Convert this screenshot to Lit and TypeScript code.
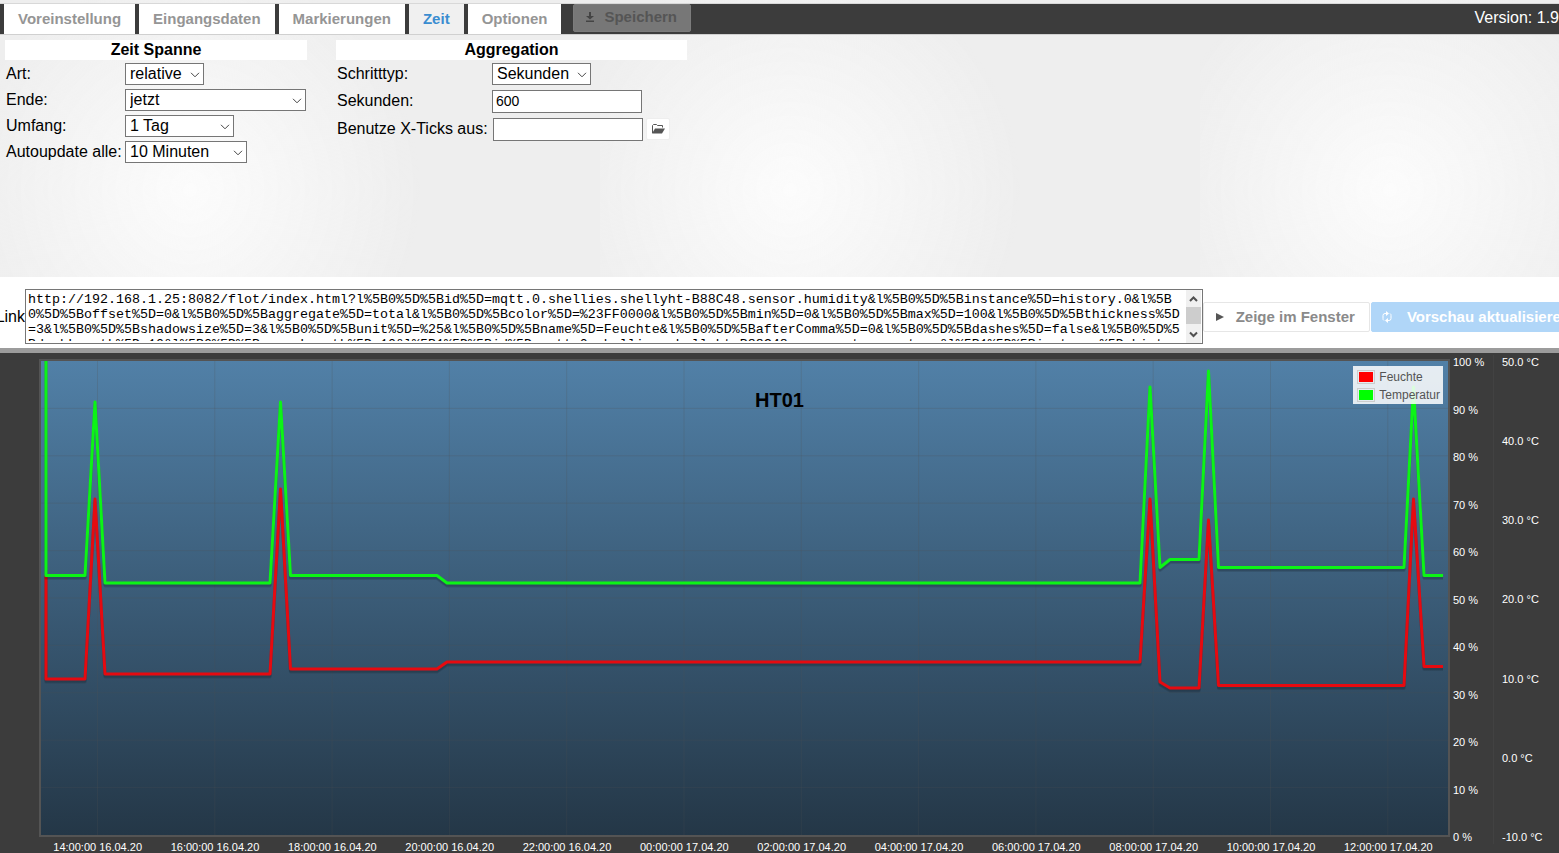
import { LitElement, html, svg, css } from "lit";
import { customElement, property, state } from "lit/decorators.js";
import { classMap } from "lit/directives/class-map.js";

const LINK = [
  "http://192.168.1.25:8082/flot/index.html?l%5B0%5D%5Bid%5D=mqtt.0.shellies.shellyht-B88C48.sensor.humidity&l%5B0%5D%5Binstance%5D=history.0&l%5B",
  "0%5D%5Boffset%5D=0&l%5B0%5D%5Baggregate%5D=total&l%5B0%5D%5Bcolor%5D=%23FF0000&l%5B0%5D%5Bmin%5D=0&l%5B0%5D%5Bmax%5D=100&l%5B0%5D%5Bthickness%5D",
  "=3&l%5B0%5D%5Bshadowsize%5D=3&l%5B0%5D%5Bunit%5D=%25&l%5B0%5D%5Bname%5D=Feuchte&l%5B0%5D%5BafterComma%5D=0&l%5B0%5D%5Bdashes%5D=false&l%5B0%5D%5",
  "BdashLength%5D=10&l%5B0%5D%5BspaceLength%5D=10&l%5B1%5D%5Bid%5D=mqtt.0.shellies.shellyht-B88C48.sensor.temperature&l%5B1%5D%5Binstance%5D=histor",
].join("\n");

type Point = [number, number];

// Points in the coordinate system of the plot's viewBox
const HUMIDITY: Point[] = [
  [46, 575], [46, 679], [85, 679], [95, 499], [105, 674], [270, 674],
  [280.5, 489], [290.5, 669], [437, 669], [447, 662], [1140, 662], [1150, 499],
  [1160, 682], [1170, 688], [1199, 688], [1208.5, 520], [1218.5, 685.5],
  [1404, 685.5], [1413.5, 499], [1424, 666.5], [1443, 666.5],
];
const TEMPERATURE: Point[] = [
  [46, 350], [46, 575.5], [85, 575.5], [95, 402], [105, 583], [270, 583],
  [280.5, 402], [290.5, 575.5], [437, 575.5], [447, 583], [1140, 583],
  [1150, 387], [1160, 567.5], [1170, 559.5], [1199, 559.5], [1208.5, 371],
  [1218.5, 567.5], [1404, 567.5], [1413.5, 387], [1424, 575.5], [1443, 575.5],
];

const TIMES = [
  "14:00:00 16.04.20", "16:00:00 16.04.20", "18:00:00 16.04.20", "20:00:00 16.04.20",
  "22:00:00 16.04.20", "00:00:00 17.04.20", "02:00:00 17.04.20", "04:00:00 17.04.20",
  "06:00:00 17.04.20", "08:00:00 17.04.20", "10:00:00 17.04.20", "12:00:00 17.04.20",
];
const PERCENTS = [100, 90, 80, 70, 60, 50, 40, 30, 20, 10, 0];
const DEGREES = ["50.0", "40.0", "30.0", "20.0", "10.0", "0.0", "-10.0"];

@customElement("drop-down")
class DropDown extends LitElement {
  @property() label = "";
  @property({ type: Array }) options: string[] = [];

  static styles = css`
    :host { display: grid; }
    .select, .chevron { grid-area: 1 / 1; }
    .select {
      appearance: none;
      box-sizing: border-box;
      width: 100%;
      height: 22px;
      margin: 0;
      padding: 0 20px 0 4px;
      border: 1px solid #767676;
      border-radius: 0;
      background: #fff;
      color: #000;
      font: 16px/20px "Liberation Sans", Arial, sans-serif;
    }
    .chevron {
      justify-self: end;
      align-self: center;
      width: 10px;
      height: 6px;
      margin: 2px 4px 0 0;
      pointer-events: none;
    }
  `;

  render() {
    return html`
      <select class="select" aria-label=${this.label}>
        ${this.options.map((o) => html`<option>${o}</option>`)}
      </select>
      <svg class="chevron" viewBox="0 0 10 6" aria-hidden="true">
        <path d="M1 .8 5 4.8 9 .8" fill="none" stroke="#444" />
      </svg>
    `;
  }
}

@customElement("flot-chart")
class FlotChart extends LitElement {
  static styles = css`
    :host {
      position: relative;
      display: grid;
      grid-template-columns: minmax(0, 1fr) 43px 66px;
      grid-template-rows: minmax(240px, 1fr) 16px;
      padding: 6px 0 0 39px;
      background: #3c3c3c;
      color: #fff;
      font: 11px/14px "Liberation Sans", Arial, sans-serif;
    }
    .plot {
      position: relative;
      border: 2px solid #545454;
      background: linear-gradient(#5180a7, #243747);
    }
    .canvas { position: absolute; inset: 0; width: 100%; height: 100%; }
    .grid { stroke: rgba(84, 84, 84, 0.22); stroke-width: 1; }
    .line { fill: none; stroke-width: 3; stroke-linejoin: round; }
    .shade { fill: none; stroke: rgba(0, 0, 0, 0.11); stroke-width: 3; stroke-linejoin: round; }
    .line, .shade, .grid { vector-effect: non-scaling-stroke; }
    .red { stroke: #e60a10; }
    .green { stroke: #0cf416; }
    .legend {
      position: absolute;
      top: 5px;
      right: 5px;
      margin: 0;
      padding: 2px 3px 0 4px;
      list-style: none;
      background: rgba(255, 255, 255, 0.85);
      color: #545454;
      font-size: 12px;
      line-height: 18px;
    }
    .entry { display: flex; align-items: center; gap: 4px; }
    .swatch {
      width: 14px;
      height: 10px;
      padding: 1px;
      border: 1px solid #ccc;
      background-clip: content-box;
    }
    .swatch-red { background-color: #f00; }
    .swatch-green { background-color: #0f0; }
    .title {
      position: absolute;
      top: 36px;
      left: 0;
      right: 0;
      margin: 0;
      color: #000;
      font-size: 20px;
      line-height: 22px;
      text-align: center;
    }
    .axis {
      display: flex;
      flex-direction: column;
      justify-content: space-between;
      margin: -4px 0 -7px;
      padding-left: 3px;
      white-space: nowrap;
    }
    .degrees { border-left: 1px solid #424242; padding-left: 8px; }
    .times {
      display: grid;
      grid-template-columns: repeat(12, minmax(0, 1fr));
      text-align: center;
      white-space: nowrap;
      padding: 3px 3px 0 0;
    }
  `;

  private trace(points: Point[], dy = 0) {
    return points.map(([x, y]) => `${x},${y + dy}`).join(" ");
  }

  render() {
    return html`
      <div class="plot">
        <svg class="canvas" viewBox="41 361 1407 474" preserveAspectRatio="none" role="img" aria-label="HT01">
          ${TIMES.map((_, i) => {
            const x = 97.5 + i * 117.3;
            return svg`<line class="grid" x1=${x} x2=${x} y1="361" y2="835" />`;
          })}
          ${PERCENTS.slice(1, -1).map((p) => {
            const y = 835 - p * 4.74;
            return svg`<line class="grid" x1="41" x2="1448" y1=${y} y2=${y} />`;
          })}
          ${[
            { points: HUMIDITY, tone: "red" },
            { points: TEMPERATURE, tone: "green" },
          ].map(({ points, tone }) => svg`
            <polyline class="shade" points=${this.trace(points, 3)} />
            <polyline class="shade" points=${this.trace(points, 2)} />
            <polyline class="line ${tone}" points=${this.trace(points)} />
          `)}
        </svg>
        <ul class="legend">
          <li class="entry"><span class="swatch swatch-red"></span>Feuchte</li>
          <li class="entry"><span class="swatch swatch-green"></span>Temperatur</li>
        </ul>
      </div>
      <div class="axis">${PERCENTS.map((p) => html`<span>${p} %</span>`)}</div>
      <div class="axis degrees">${DEGREES.map((d) => html`<span>${d} °C</span>`)}</div>
      <div class="times">${TIMES.map((t) => html`<span>${t}</span>`)}</div>
      <h1 class="title">HT01</h1>
    `;
  }
}

@customElement("app-root")
class AppRoot extends LitElement {
  @state() private active = "Zeit";

  static styles = css`
    :host {
      display: flex;
      flex-direction: column;
      min-height: 100vh;
      overflow: hidden;
      background: #fff;
      color: #000;
      font: 16px/20px "Liberation Sans", Arial, sans-serif;
    }
    .settings {
      min-height: 277px;
      background:
        radial-gradient(circle at 190px 190px, #fcfcfc, rgba(252, 252, 252, 0) 230px) 0 0 / 600px 420px
        #eee;
    }
    .bar {
      display: flex;
      height: 30px;
      padding-left: 4px;
      border-top: 1px solid #d8d8d8;
      border-bottom: 1px solid #d0d0d0;
      margin-top: 3px;
      background: #3c3c3c;
    }
    .tabs { display: flex; gap: 4px; }
    .tab {
      padding: 0 14px 1px;
      border: 0;
      background: #fff;
      color: #959595;
      font: bold 15px/28px "Liberation Sans", Arial, sans-serif;
    }
    .tab.active { background: #f0f0f0; color: #3a8dd0; }
    .button {
      display: flex;
      align-items: center;
      border: 1px solid #ddd;
      border-radius: 2px;
      background: #fff;
      color: #8a8a8a;
      font: bold 15px/20px "Liberation Sans", Arial, sans-serif;
      white-space: nowrap;
    }
    .save {
      height: 28px;
      margin-left: 12px;
      padding: 0 13px 2px 8px;
      gap: 6px;
      border-color: #7c7c7c;
      background: #777;
      color: #555;
    }
    .icon { flex: none; width: 16px; height: 16px; }
    .version { margin: 4px 0 0 auto; color: #fff; white-space: nowrap; }
    .panels { display: flex; align-items: flex-start; gap: 29px; padding: 5px 5px 0; }
    .panel { display: grid; align-items: center; }
    .span { grid-template-columns: 119px 183px; }
    .aggregation { grid-template-columns: 155px 196px; }
    .heading {
      grid-column: 1 / -1;
      margin: 0 0 1px;
      background: #fff;
      font-size: 16px;
      line-height: 20px;
      text-align: center;
    }
    .name { padding-left: 1px; line-height: 26px; white-space: nowrap; }
    .field { padding-left: 1px; }
    .art { width: 79px; }
    .ende { width: 181px; }
    .umfang { width: 109px; }
    .auto { width: 122px; }
    .type { width: 99px; }
    .input {
      box-sizing: border-box;
      display: block;
      width: 150px;
      height: 23px;
      margin: 0;
      padding: 1px 3px;
      border: 1px solid #767676;
      background: #fff;
      color: #000;
      font: 14px/18px "Liberation Sans", Arial, sans-serif;
    }
    .tall { line-height: 28px; }
    .pick { display: flex; align-items: center; gap: 3px; padding-left: 2px; }
    .folder {
      width: 24px;
      height: 22px;
      padding: 0 3px;
      border-color: #eee;
      color: #555;
    }
    .link-row {
      display: flex;
      align-items: center;
      box-sizing: border-box;
      min-height: 71px;
      padding-top: 8px;
      margin-right: -26px;
    }
    .link-label { display: flex; justify-content: flex-end; width: 25px; }
    .link-box {
      display: flex;
      flex: 1;
      box-sizing: border-box;
      min-width: 0;
      height: 55px;
      border: 1px solid #767676;
      background: #fff;
    }
    .link {
      flex: 1;
      min-width: 0;
      box-sizing: border-box;
      height: 51px;
      margin: 0;
      padding: 2px 2px 0;
      border: 0;
      outline: 0;
      resize: none;
      overflow: hidden;
      background: none;
      color: #000;
      font-family: "Liberation Mono", "Courier New", monospace;
      line-height: 15px;
      white-space: pre;
    }
    .scroll {
      display: flex;
      flex-direction: column;
      align-items: center;
      width: 15px;
      margin-right: 1px;
      background: #f0f0f0;
    }
    .arrow { width: 15px; height: 17px; }
    .thumb { width: 15px; height: 17px; background: #cdcdcd; }
    .show {
      height: 30px;
      margin-right: 1px;
      padding: 0 14px 0 8px;
      gap: 8px;
      border-color: #e6e6e6;
    }
    .refresh {
      height: 30px;
      padding: 0 14px 0 7px;
      gap: 12px;
      border-color: #b0d6f8;
      background: #b0d6f8;
      color: #fff;
    }
    .divider { height: 5px; background: #9c9c9c; }
    .chart { flex: 1; }
  `;

  private renderTabs() {
    const names = ["Voreinstellung", "Eingangsdaten", "Markierungen", "Zeit", "Optionen"];
    return names.map((name) => html`
      <button
        class=${classMap({ tab: true, active: name === this.active })}
        role="tab"
        aria-selected=${name === this.active}
        @click=${() => (this.active = name)}
      >${name}</button>
    `);
  }

  render() {
    return html`
      <section class="settings">
        <div class="bar">
          <div class="tabs" role="tablist">${this.renderTabs()}</div>
          <button class="button save">
            <svg class="icon" viewBox="0 0 16 16" aria-hidden="true">
              <path d="M7 3h2v4h3L8 10.500 4 7h3zM4 11.500h8v1.500H4z" fill="#444" />
            </svg>
            Speichern
          </button>
          <div class="version">Version: 1.9</div>
        </div>
        <div class="panels">
          <div class="panel span">
            <h2 class="heading">Zeit Spanne</h2>
            <span class="name">Art:</span>
            <div class="field"><drop-down class="art" label="Art" .options=${["relative", "static"]}></drop-down></div>
            <span class="name">Ende:</span>
            <div class="field"><drop-down class="ende" label="Ende" .options=${["jetzt"]}></drop-down></div>
            <span class="name">Umfang:</span>
            <div class="field"><drop-down class="umfang" label="Umfang" .options=${["1 Tag"]}></drop-down></div>
            <span class="name">Autoupdate alle:</span>
            <div class="field"><drop-down class="auto" label="Autoupdate alle" .options=${["10 Minuten"]}></drop-down></div>
          </div>
          <div class="panel aggregation">
            <h2 class="heading">Aggregation</h2>
            <span class="name">Schritttyp:</span>
            <div class="field"><drop-down class="type" label="Schritttyp" .options=${["Sekunden"]}></drop-down></div>
            <label class="name tall" for="seconds">Sekunden:</label>
            <div class="field"><input class="input" id="seconds" type="text" value="600" /></div>
            <label class="name tall" for="ticks">Benutze X-Ticks aus:</label>
            <div class="pick">
              <input class="input" id="ticks" type="text" />
              <button class="button folder" aria-label="ID wählen">
                <svg class="icon" viewBox="0 0 16 16" aria-hidden="true">
                  <path d="M2.500 12V4.500l1-1h3l1 1h5v2" fill="none" stroke="currentColor" />
                  <path d="M5 7.500h10L12 12.500H2z" fill="currentColor" />
                </svg>
              </button>
            </div>
          </div>
        </div>
      </section>
      <section class="link-row">
        <label class="link-label" for="link">Link</label>
        <div class="link-box">
          <textarea class="link" id="link" .value=${LINK}></textarea>
          <div class="scroll" aria-hidden="true">
            <svg class="arrow" viewBox="0 0 15 17"><path d="M4 11l3.500-3.500L11 11" fill="none" stroke="#505050" stroke-width="2" /></svg>
            <div class="thumb"></div>
            <svg class="arrow" viewBox="0 0 15 17"><path d="M4 8.500l3.500 3.500L11 8.500" fill="none" stroke="#505050" stroke-width="2" /></svg>
          </div>
        </div>
        <button class="button show">
          <svg class="icon" viewBox="0 0 16 16" aria-hidden="true"><path d="M4 4l8 4-8 4z" fill="#555" /></svg>
          Zeige im Fenster
        </button>
        <button class="button refresh">
          <svg class="icon" viewBox="0 0 16 16" aria-hidden="true">
            <path d="M7.500 4.500H6a2 2 0 0 0-2 2v3a2 2 0 0 0 1 2M8.500 11.500H10a2 2 0 0 0 2-2v-3a2 2 0 0 0-1-2" fill="none" stroke="#fff" />
            <path d="M7 2l3 2.500L7 7zM9 14l-3-2.500L9 9z" fill="#fff" />
          </svg>
          Vorschau aktualisieren
        </button>
      </section>
      <div class="divider"></div>
      <flot-chart class="chart"></flot-chart>
    `;
  }
}
